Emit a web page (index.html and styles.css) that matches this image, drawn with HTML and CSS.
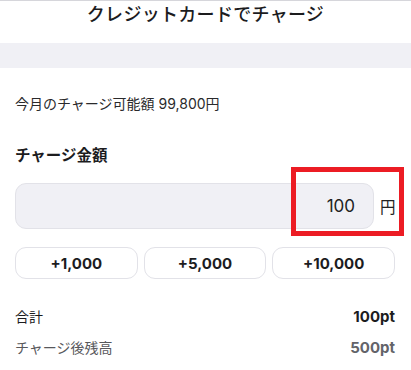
FILE: index.html
```html
<!DOCTYPE html>
<html lang="ja">
<head>
<meta charset="utf-8">
<link rel="stylesheet" href="styles.css">
</head>
<body>
<div class="page">
  <header class="header"><h1 class="title">クレジットカードでチャージ</h1></header>
  <div class="band"></div>
  <main class="main">
    <p class="avail">今月のチャージ可能額 99,800円</p>
    <h2 class="label">チャージ金額</h2>
    <div class="input-row">
      <div class="input"><span class="input-value">100</span></div>
      <span class="unit">円</span>
    </div>
    <div class="buttons">
      <button class="btn">+1,000</button>
      <button class="btn">+5,000</button>
      <button class="btn">+10,000</button>
    </div>
    <div class="row total"><span>合計</span><span class="val">100pt</span></div>
    <div class="row after"><span>チャージ後残高</span><span class="val">500pt</span></div>
  </main>
  <div class="highlight"></div>
</div>
</body>
</html>
```

FILE: styles.css
```css
* { box-sizing: border-box; }
html, body { margin: 0; padding: 0; background: #fff; }
body {
  font-family: "Inter", "Noto Sans CJK JP", sans-serif;
  color: #1c1c1e;
  width: 411px;
  height: 370px;
  overflow: hidden;
}
.page { position: relative; height: 370px; }
.header {
  border-top: 1px solid #d6d6db;
  height: 43px;
  padding-top: 3px;
}
.title {
  margin: 0;
  font-size: 18px;
  font-weight: 500;
  line-height: 22px;
  text-align: center;
  letter-spacing: 0.3px;
}
.band { height: 25px; background: #f0f0f5; }
.main { padding: 0 16px 0 15px; }
.avail {
  margin: 26px 0 0;
  font-size: 14px;
  line-height: 20px;
  color: #2a2a2c;
}
.label {
  margin: 31px 0 0;
  font-size: 15.5px;
  font-weight: 700;
  line-height: 22px;
}
.input-row {
  margin-top: 16px;
  display: flex;
  align-items: center;
  gap: 6px;
}
.input {
  flex: 1;
  height: 46px;
  background: #f0f0f5;
  border: 1.5px solid #e2e2e8;
  border-radius: 11px;
  display: flex;
  align-items: center;
  justify-content: flex-end;
  padding-right: 18px;
}
.input-value { font-size: 17px; color: #222; }
.unit { font-size: 15.5px; width: 15px; color: #222; }
.buttons {
  margin-top: 18px;
  display: grid;
  grid-template-columns: repeat(3, 1fr);
  gap: 6px;
}
.btn {
  height: 32px;
  background: #fff;
  border: 1.5px solid #e2e2e8;
  border-radius: 11px;
  font-family: inherit;
  font-size: 15px;
  font-weight: 700;
  color: #1c1c1e;
  padding: 0;
}
.row {
  display: flex;
  justify-content: space-between;
  align-items: center;
  font-size: 14px;
  line-height: 20px;
}
.row .val { font-size: 15px; font-weight: 700; }
.total { margin-top: 28px; }
.after { margin-top: 11px; color: #58585c; }
.after .val { color: #636369; }
.highlight {
  position: absolute;
  left: 291px;
  top: 167px;
  width: 113px;
  height: 69px;
  border: 5px solid #ec1c24;
}
```
